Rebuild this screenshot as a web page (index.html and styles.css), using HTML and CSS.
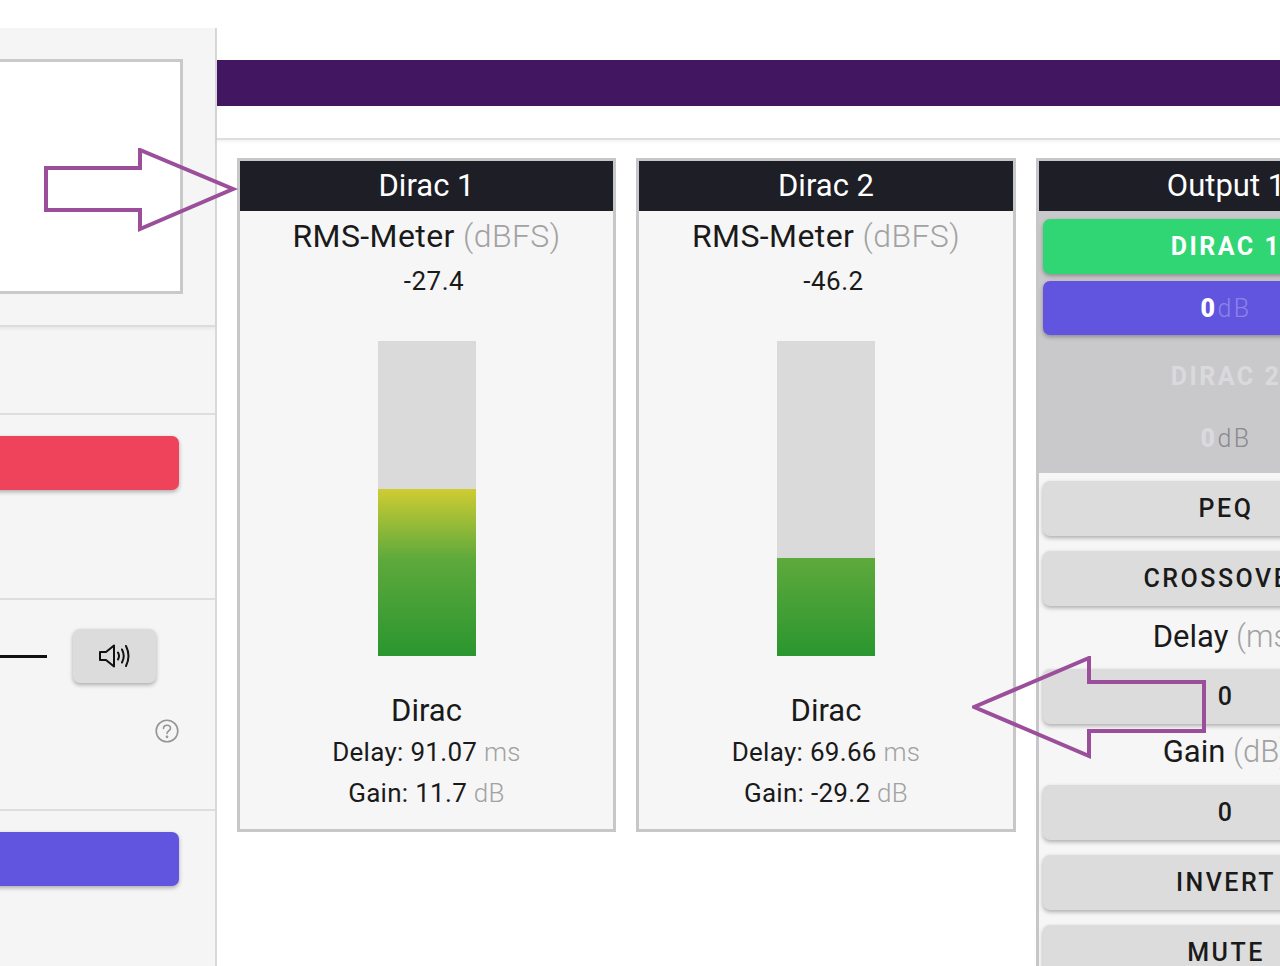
FILE: index.html
```html
<!DOCTYPE html>
<html lang="en">
<head>
<meta charset="utf-8">
<title>Dirac</title>
<link rel="stylesheet" href="styles.css">
</head>
<body>
<div class="page">
  <aside class="sidebar">
    <section class="sec sec-top"><div class="whitebox"></div></section>
    <section class="sec sec-empty"></section>
    <section class="sec sec-red"><button class="btn wide red"></button></section>
    <section class="sec sec-vol">
      <div class="vol-row">
        <div class="slider"></div>
        <button class="btn speaker" aria-label="Volume">
          <svg width="34" height="26" viewBox="0 0 34 26" fill="none" stroke="#111" stroke-width="2"><path d="M2 9h6l8-6.5v21L8 17H2z" stroke-linejoin="round"/><path d="M20 9.500q2 3.500 0 7M24 6.500q3.500 6.500 0 13M28 3q5 10 0 20" stroke-linecap="round"/></svg>
        </button>
      </div>
      <div class="help-row">
        <svg width="24" height="24" viewBox="0 0 24 24" fill="none" stroke="#959595" stroke-width="1.600"><circle cx="12" cy="12" r="10.800"/><path d="M8.500 9.500c0-2 1.500-3.300 3.500-3.300s3.500 1.300 3.500 3c0 2.600-3.500 2.500-3.500 5.300" stroke-linecap="round"/><circle cx="12" cy="17.800" r=".6"/></svg>
      </div>
    </section>
    <section class="sec sec-blue"><button class="btn wide blue"></button></section>
  </aside>

  <main class="main">
    <div class="topbar"></div>
    <div class="subbar"></div>
    <div class="panels">
      <article class="panel">
        <h2 class="head">Dirac 1</h2>
        <div class="title">RMS-Meter <span class="unit">(dBFS)</span></div>
        <div class="value">-27.4</div>
        <div class="meter"><div class="fill" style="height:167px"></div></div>
        <div class="name">Dirac</div>
        <div class="info i1">Delay: 91.07 <span class="unit">ms</span></div>
        <div class="info i2">Gain: 11.7 <span class="unit">dB</span></div>
      </article>
      <article class="panel">
        <h2 class="head">Dirac 2</h2>
        <div class="title">RMS-Meter <span class="unit">(dBFS)</span></div>
        <div class="value">-46.2</div>
        <div class="meter"><div class="fill" style="height:98px"></div></div>
        <div class="name">Dirac</div>
        <div class="info i1">Delay: 69.66 <span class="unit">ms</span></div>
        <div class="info i2">Gain: -29.2 <span class="unit">dB</span></div>
      </article>
      <article class="panel output">
        <h2 class="head">Output 1</h2>
        <div class="routes">
          <button class="btn green">DIRAC 1</button>
          <button class="btn blue gainbtn"><b>0</b><span class="dim">dB</span></button>
          <div class="off first-off">DIRAC 2</div>
          <div class="off off-gain"><b>0</b><span class="dim2">dB</span></div>
        </div>
        <div class="controls">
          <button class="btn grey">PEQ</button>
          <button class="btn grey">CROSSOVER</button>
          <div class="label">Delay <span class="unit">(ms)</span></div>
          <button class="btn grey">0</button>
          <div class="label">Gain <span class="unit">(dB)</span></div>
          <button class="btn grey">0</button>
          <button class="btn grey">INVERT</button>
          <button class="btn grey">MUTE</button>
        </div>
      </article>
    </div>
  </main>

  <svg class="arrow arrow-r" width="200" height="90" viewBox="0 0 200 90"><path d="M2 20H96V2L189 41 96 81V62H2z"/></svg>
  <svg class="arrow arrow-l" width="240" height="106" viewBox="0 0 240 106"><path d="M2 51 117 2V26H232V75H117V100z"/></svg>
</div>
</body>
</html>
```
FILE: styles.css
```css
* { box-sizing: border-box; }
html, body { margin: 0; height: 966px; overflow: hidden; background: #fff; }
body { font-family: Roboto, "Open Sans", sans-serif; color: #1a1a1a; }
.page { position: relative; display: flex; width: 1280px; height: 966px; overflow: hidden; align-items: flex-start; }

.sidebar { flex: none; width: 237px; margin-left: -20px; margin-top: 28px; height: 938px; background: #f5f5f6; border-right: 2px solid #d9d9d9; display: flex; flex-direction: column; }
.sec { padding-right: 36px; }
.sec-top { height: 299px; padding-top: 31px; padding-right: 32px; border-bottom: 2px solid #dcdcdc; box-shadow: 0 2px 3px rgba(0,0,0,.06); }
.whitebox { height: 235px; background: #fff; border: 3px solid #c9c9c9; }
.sec-empty { height: 88px; border-bottom: 2px solid #dedede; }
.sec-red { height: 185px; padding-top: 21px; border-bottom: 2px solid #dedede; }
.sec-vol { height: 211px; padding-top: 29px; border-bottom: 2px solid #dedede; }
.sec-blue { padding-top: 21px; }
.wide { display: block; width: 100%; height: 54px; }
.btn { border: 0; border-radius: 7px; padding: 0; font: inherit; box-shadow: 0 2px 4px rgba(0,0,0,.3); }
.red { background: #ee435b; }
.blue { background: #6155e0; color: #fff; }
.vol-row { display: flex; align-items: center; height: 54px; }
.slider { width: 67px; height: 3px; background: #111; }
.speaker { margin-left: 26px; width: 83px; height: 54px; background: #dcdcdc; display: flex; align-items: center; justify-content: center; }
.help-row { display: flex; justify-content: flex-end; margin-top: 36px; padding-right: 0; }

.main { flex: none; width: 1300px; margin-top: 60px; }
.topbar { height: 46px; background: #421660; }
.subbar { height: 34px; border-bottom: 2px solid #dedede; box-shadow: 0 2px 3px rgba(0,0,0,.05); }
.panels { display: flex; gap: 20px; padding: 18px 0 0 20px; align-items: flex-start; }

.panel { flex: none; width: 380px; height: 674px; background: #f6f6f7; border: 3px solid #c7c7c9; display: flex; flex-direction: column; align-items: center; }
.panel:first-child { width: 379px; }
.head { margin: 0; align-self: stretch; height: 50px; line-height: 50px; background: #1d1e26; color: #fff; text-align: center; font-size: 31px; font-weight: 400; }
.title { margin-top: 4px; height: 42px; line-height: 42px; font-size: 32px; white-space: nowrap; letter-spacing: .4px; }
.unit { color: #a2a2a2; font-weight: 300; }
.value { height: 48px; line-height: 48px; font-size: 26px; padding-left: 15px; letter-spacing: .5px; }
.meter { margin-top: 36px; width: 98px; height: 315px; background: #dadada; display: flex; align-items: flex-end; }
.fill { width: 100%; background: linear-gradient(#cfcc33, #5ea93c 42%, #2a962f) bottom / 100% 167px no-repeat; }
.name { margin-top: 34px; height: 42px; line-height: 42px; font-size: 31px; }
.info { font-size: 26px; height: 41px; line-height: 41px; white-space: nowrap; letter-spacing: .3px; }
.i2 { height: 40px; }

.output { flex: none; height: 900px; }
.routes { align-self: stretch; height: 262px; background: #c9c9cc; padding: 8px 4px 0; display: flex; flex-direction: column; align-items: stretch; }
.routes .btn { height: 55px; font-size: 25px; font-weight: 700; letter-spacing: 2.500px; color: #fff; }
.green { background: #2fd673; }
.gainbtn { margin-top: 7px; height: 54px !important; }
.dim { color: #8b84e6; font-weight: 300; }
.off { text-align: center; color: #dadadc; font-size: 25px; font-weight: 700; letter-spacing: 2.500px; }
.first-off { margin-top: 21px; height: 42px; line-height: 42px; }
.off-gain { margin-top: 20px; height: 42px; line-height: 42px; }
.dim2 { color: #8a8a8c; font-weight: 300; }
.controls { align-self: stretch; padding: 8px 4px 0; display: flex; flex-direction: column; }
.grey { height: 55px; background: #dcdcdc; color: #1a1a1a; font-size: 25px; font-weight: 500; letter-spacing: 2.500px; flex: none; margin-bottom: 15px; }
.label { text-align: center; font-size: 31px; height: 49px; margin-top: -1px; line-height: 34px; padding-top: 0; }
.controls .grey:nth-child(4) { margin-bottom: 14px; }
.controls .grey:nth-child(4) + .label { height: 48px; line-height: 30px; }

.arrow { position: absolute; fill: none; stroke: #9b4f9b; stroke-width: 4; stroke-linejoin: miter; }
.arrow-r { left: 44px; top: 148px; }
.arrow-l { left: 972px; top: 656px; }
```
